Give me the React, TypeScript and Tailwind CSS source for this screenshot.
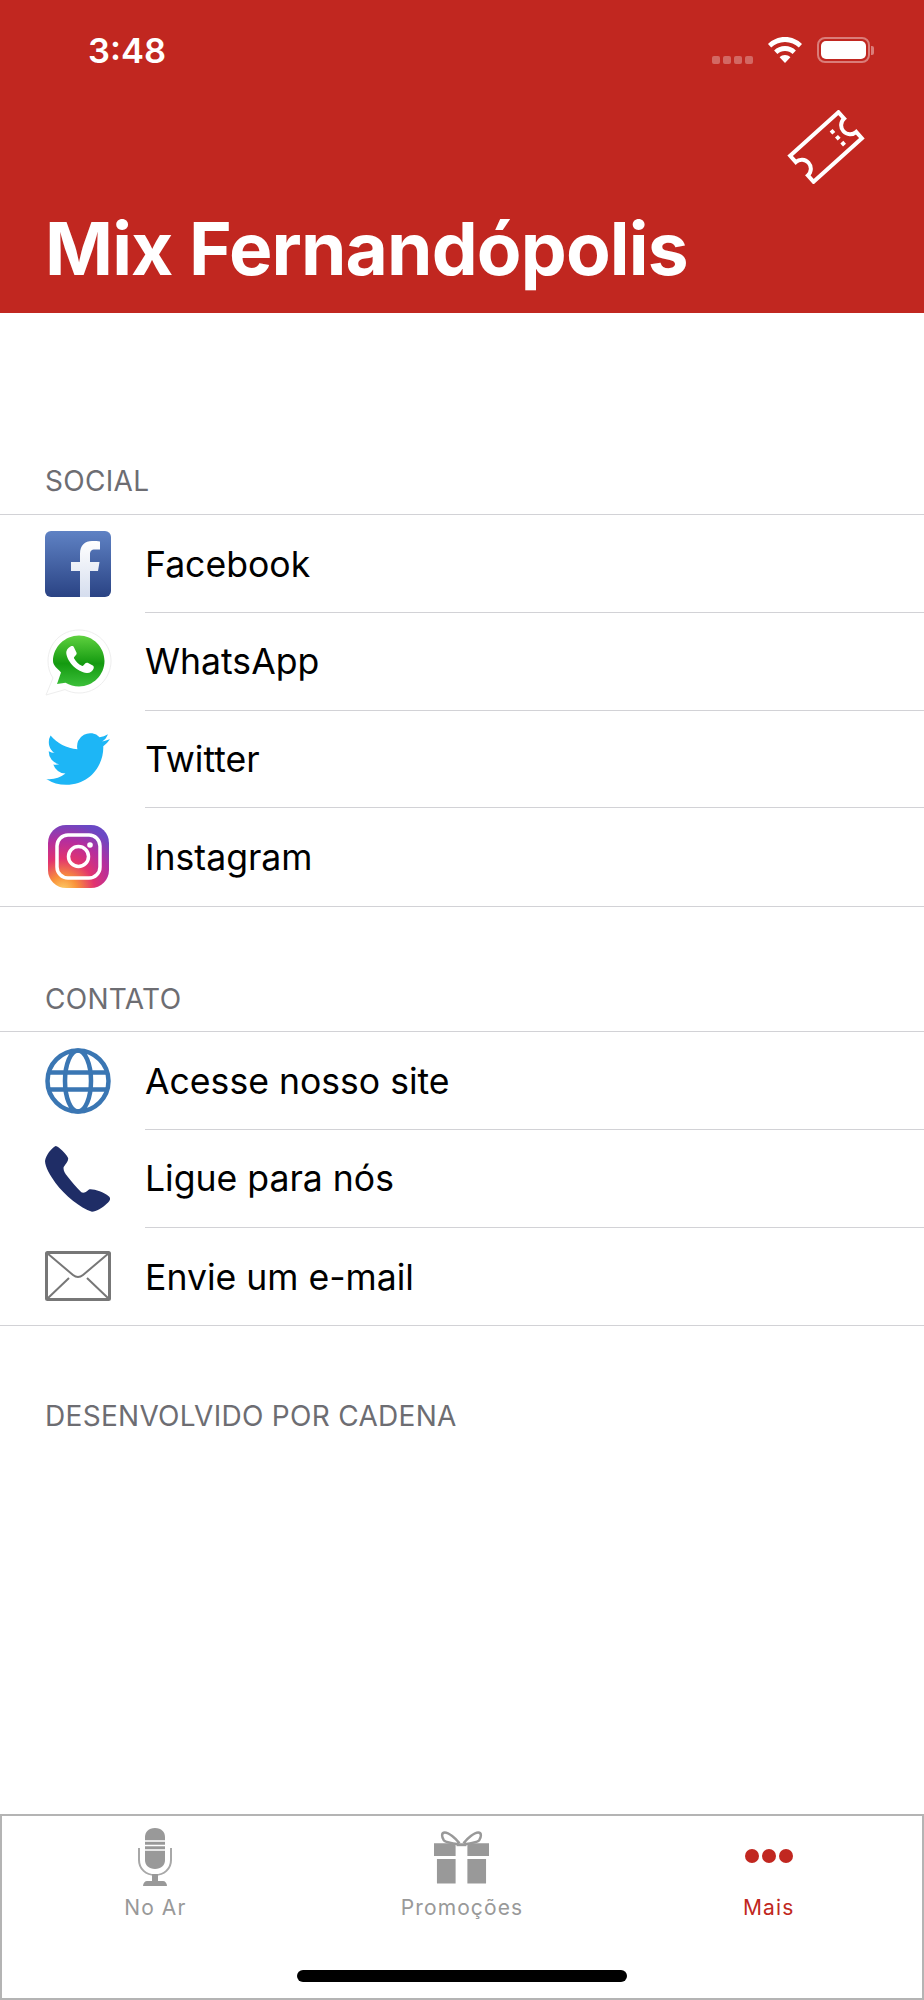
import React from 'react';

const FONT = "font-['Inter','Liberation_Sans',sans-serif]";

// Status bar
const StatusBar = () => (
  <div className="flex items-start justify-between pl-[88px] pr-[50px] pt-[31px] h-[100px]">
    <span className="text-[34.5px] leading-[40px] font-semibold text-white">3:48</span>
    <div className="flex items-start">
      <div className="flex gap-[3px] mt-[25px] mr-[14px]">
        {[0, 1, 2, 3].map((i) => (
          <div key={i} className="w-[8px] h-[8px] rounded-[2px] bg-white/30" />
        ))}
      </div>
      <svg width="36" height="28" viewBox="0 0 36 28" className="mt-[6px] mr-[14px]" fill="white">
        <path d="M18 0C11.200 0 5.200 2.700 1 7l3.200 3.600C7.700 7.100 12.600 5 18 5s10.300 2.100 13.800 5.600L35 7C30.800 2.700 24.800 0 18 0z" />
        <path d="M18 9c-4.300 0-8.100 1.700-10.900 4.500l3.300 3.600C12.300 15.200 15 14 18 14s5.700 1.200 7.600 3.100l3.300-3.600C26.100 10.700 22.300 9 18 9z" />
        <path d="M18 18c-2.100 0-4 .8-5.400 2.200L18 26l5.400-5.800C22 18.800 20.100 18 18 18z" />
      </svg>
      <div className="flex items-center mt-[6px]">
        <div className="w-[53px] h-[26px] rounded-[8px] border-2 border-white/40 p-[2px]">
          <div className="w-full h-full rounded-[5px] bg-white" />
        </div>
        <div className="w-[3px] h-[9px] rounded-r-[2px] bg-white/40 ml-[1px]" />
      </div>
    </div>
  </div>
);

const TicketIcon = () => (
  <svg width="80" height="74" viewBox="-40 -37 80 74" fill="none" stroke="white" strokeWidth="4">
    <g transform="rotate(-42)">
      <path d="M-32.500 -17.500 H32.500 V-9 A9 9 0 0 0 32.500 9 V17.500 H-32.500 V9 A9 9 0 0 0 -32.500 -9 Z" />
      <path d="M15 -9 V11" strokeDasharray="4 4" />
    </g>
  </svg>
);

// Icons for the rows
const FacebookIcon = () => (
  <svg width="66" height="66" viewBox="0 0 66 66">
    <defs>
      <linearGradient id="fb" x1="0" y1="0" x2="0" y2="1">
        <stop offset="0" stopColor="#5f82c4" />
        <stop offset="1" stopColor="#2a4384" />
      </linearGradient>
      <linearGradient id="fbf" x1="0" y1="0" x2="0" y2="1">
        <stop offset="0" stopColor="#ffffff" />
        <stop offset="1" stopColor="#d5ddee" />
      </linearGradient>
    </defs>
    <rect width="66" height="66" rx="6" fill="url(#fb)" />
    <path d="M35 66V40H26V31h9v-8c0-9 5-13 12-13 3 0 6 .2 8 .4v8h-5c-4 0-5 2-5 5V31h9.500l-1.500 9H45v26z" fill="url(#fbf)" />
  </svg>
);

const WhatsAppIcon = () => (
  <svg width="68" height="68" viewBox="0 0 68 68">
    <defs>
      <linearGradient id="wa" x1="0" y1="0" x2="0" y2="1">
        <stop offset="0" stopColor="#5fd13f" />
        <stop offset="0.55" stopColor="#149a10" />
        <stop offset="1" stopColor="#3cc03a" />
      </linearGradient>
    </defs>
    <path d="M1 67l7-17C4.500 45 3 39 3 33 3 16 16 2 34 2s32 14 32 31-14 32-32 32c-5 0-10-1.200-14-3.400z" fill="#fff" stroke="#eeeeee" strokeWidth="1" />
    <path d="M12 56l4-11.500C13 40.500 8 38 8 33 8 19 20 7.500 34 7.500S59.500 19 59.500 33 48 58.500 34 58.500c-5 0-9.500-1.400-13.500-3.800z" fill="url(#wa)" />
    <g transform="translate(34 33) scale(.85) translate(-34 -33)">
      <path d="M24 16c2-1 3.500-.5 4 .8l3 6.200c.5 1 .2 2-.6 2.900l-2 2.300c-.5.6-.5 1.100-.1 1.800 2.200 3.800 5 6.600 9 8.600.7.4 1.300.3 1.800-.2l2.400-2.700c.8-.8 1.700-1 2.700-.5l6 3c1.200.6 1.500 1.800 1 3.500-1 3.300-4.500 5.500-8 5.300-11-1-23-12.500-24.200-23.500C18.700 21 21 17.500 24 16z" fill="#fff" />
    </g>
  </svg>
);

const TwitterIcon = () => (
  <svg width="64" height="54" viewBox="0 1.800 24 20.400" fill="#1db6f6" className="ml-[1px]">
    <path d="M23.953 4.570a10 10 0 01-2.825.775 4.958 4.958 0 002.163-2.723c-.951.555-2.005.959-3.127 1.184a4.920 4.920 0 00-8.384 4.482C7.690 8.095 4.067 6.130 1.640 3.162a4.822 4.822 0 00-.666 2.475c0 1.710.870 3.213 2.188 4.096a4.904 4.904 0 01-2.228-.616v.060a4.923 4.923 0 003.946 4.827 4.996 4.996 0 01-2.212.085 4.936 4.936 0 004.604 3.417 9.867 9.867 0 01-6.102 2.105c-.390 0-.779-.023-1.170-.067a13.995 13.995 0 007.557 2.209c9.053 0 13.998-7.496 13.998-13.985 0-.210 0-.420-.015-.630A9.935 9.935 0 0024 4.590z" />
  </svg>
);

const InstagramIcon = () => (
  <svg width="61" height="63" viewBox="0 0 61 63" className="ml-[3px] -mt-[2px]">
    <defs>
      <radialGradient id="ig" cx="0.25" cy="1.05" r="1.15">
        <stop offset="0" stopColor="#fdd36b" />
        <stop offset="0.2" stopColor="#f9923a" />
        <stop offset="0.45" stopColor="#e2336f" />
        <stop offset="0.7" stopColor="#b52e9e" />
        <stop offset="0.95" stopColor="#6a48c4" />
      </radialGradient>
    </defs>
    <rect width="61" height="63" rx="18" fill="url(#ig)" />
    <rect x="9" y="10" width="43" height="43" rx="11" fill="none" stroke="#fff" strokeWidth="3.500" />
    <circle cx="30.500" cy="31.500" r="10" fill="none" stroke="#fff" strokeWidth="3.500" />
    <circle cx="42" cy="20" r="2.800" fill="#fff" />
  </svg>
);

const GlobeIcon = () => (
  <svg width="66" height="66" viewBox="0 0 66 66" fill="none" stroke="#3a76b3" strokeWidth="4.500">
    <circle cx="33" cy="33" r="30.500" />
    <ellipse cx="33" cy="33" rx="13" ry="30.500" />
    <path d="M3 24.500h60M3 41.500h60" />
  </svg>
);

const PhoneIcon = () => (
  <svg width="66" height="66" viewBox="15 15 198 198" fill="#1f2d66">
    <path d="M47 15C58 18 76 36 84 50C87 58 78 68 71 78C69 86 74 96 82 106C94 122 110 140 124 154C132 158 138 152 146 146C156 142 190 152 206 166C214 172 210 180 200 188C188 200 168 212 156 212C120 200 76 165 46 125C30 102 16 80 15 60C18 42 34 22 47 15Z" />
  </svg>
);

const MailIcon = () => (
  <svg width="66" height="50" viewBox="0 0 66 50" fill="none" stroke="#777" strokeWidth="2">
    <rect x="1.500" y="1.500" width="63" height="47" rx="1" strokeWidth="3" />
    <path d="M2 2l26 22c3 2.500 7 2.500 10 0L64 2" />
    <path d="M2 48l22-21M64 48L42 27" />
  </svg>
);

const MicIcon = () => (
  <svg width="34" height="58" viewBox="0 0 34 58" fill="#999">
    <path d="M17 0c-6.500 0-10 4-10 9v23c0 5.500 4 9 10 9s10-3.500 10-9V9c0-5-3.500-9-10-9z" />
    <path d="M6 13h22M6 17.500h22M6 22h22" stroke="#fff" strokeWidth="1.500" />
    <path d="M1 20v12c0 9 7 15 16 15s16-6 16-15V20" fill="none" stroke="#a8a8a8" strokeWidth="2" />
    <rect x="14" y="46" width="6" height="7" />
    <path d="M5 58c0-3 2-5 4-5h16c2 0 4 2 4 5z" />
  </svg>
);

const GiftIcon = () => (
  <svg width="55" height="56" viewBox="0 0 56 56" fill="#999">
    <path d="M22 14H0v13h22zM34 14h22v13H34zM3 30h19v25H3zM34 30h19v25H34z" />
    <path d="M26 14C22 9 15 3 11 3 7 3 8 8 10 11c2 2 8 3 15 4M30 14c4-5 11-11 15-11 4 0 3 5 1 8-2 2-8 3-15 4" fill="none" stroke="#999" strokeWidth="2.500" />
    <rect x="23" y="14" width="10" height="3" />
  </svg>
);

type Row = { label: string; icon: React.ReactNode };

const social: Row[] = [
  { label: 'Facebook', icon: <FacebookIcon /> },
  { label: 'WhatsApp', icon: <WhatsAppIcon /> },
  { label: 'Twitter', icon: <TwitterIcon /> },
  { label: 'Instagram', icon: <InstagramIcon /> },
];

const contato: Row[] = [
  { label: 'Acesse nosso site', icon: <GlobeIcon /> },
  { label: 'Ligue para nós', icon: <PhoneIcon /> },
  { label: 'Envie um e-mail', icon: <MailIcon /> },
];

const Section = ({ rows }: { rows: Row[] }) => (
  <div className="border-y border-[#d2d2d6]">
    {rows.map((row, i) => (
      <div key={row.label} className="flex h-[97.75px] pl-[45px]">
        <div className="w-[100px] flex items-center">{row.icon}</div>
        <div
          className={`flex-1 flex items-center pt-[2px] text-[35.6px] text-black ${
            i < rows.length - 1 ? 'border-b border-[#d2d2d6]' : ''
          }`}
        >
          {row.label}
        </div>
      </div>
    ))}
  </div>
);

const SectionTitle = ({ children, className }: { children: string; className: string }) => (
  <div className={`pl-[45px] text-[28px] leading-[34px] tracking-[0.3px] text-[#6d6d72] ${className}`}>{children}</div>
);

const TabItem = ({ icon, label, active }: { icon: React.ReactNode; label: string; active?: boolean }) => (
  <div className="flex flex-col items-center">
    <div className="h-[64px] flex items-center justify-center">{icon}</div>
    <span className={`text-[21px] leading-[26px] mt-[6px] tracking-[1.1px] ${active ? 'text-[#c12720]' : 'text-[#999999]'}`}>
      {label}
    </span>
  </div>
);

export default function App() {
  return (
    <div className={`${FONT} w-[924px] h-[2000px] flex flex-col bg-white`}>
      <div className="h-[313px] bg-[#c12720]">
        <StatusBar />
        <div className="flex justify-end pr-[58px] mt-[10px] h-[74px]">
          <TicketIcon />
        </div>
        <h1 className="pl-[45px] mt-[19px] text-[73px] leading-[92px] font-bold text-white tracking-[-0.85px]">
          Mix Fernandópolis
        </h1>
      </div>

      <SectionTitle className="mt-[151px] mb-[16px]">SOCIAL</SectionTitle>
      <Section rows={social} />
      <SectionTitle className="mt-[75px] mb-[15px]">CONTATO</SectionTitle>
      <Section rows={contato} />
      <SectionTitle className="mt-[73px]">DESENVOLVIDO POR CADENA</SectionTitle>

      <div className="mt-auto h-[186px] border-2 border-[#b4b4b4] relative">
        <div className="grid grid-cols-3 pt-[9px]">
          <TabItem icon={<MicIcon />} label="No Ar" />
          <TabItem icon={<GiftIcon />} label="Promoções" />
          <TabItem
            active
            label="Mais"
            icon={
              <div className="flex gap-[3px] mb-[2px]">
                <div className="w-[14px] h-[14px] rounded-full bg-[#c12720]" />
                <div className="w-[14px] h-[14px] rounded-full bg-[#c12720]" />
                <div className="w-[14px] h-[14px] rounded-full bg-[#c12720]" />
              </div>
            }
          />
        </div>
        <div className="absolute left-[295px] bottom-[16px] w-[330px] h-[12px] rounded-full bg-black" />
      </div>
    </div>
  );
}
